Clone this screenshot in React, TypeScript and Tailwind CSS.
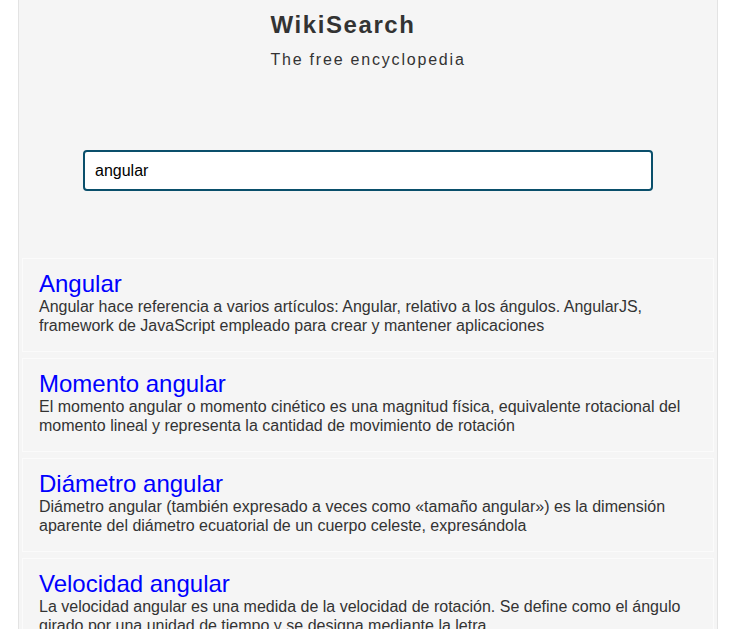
const results = [
  {
    title: 'Angular',
    snippet:
      'Angular hace referencia a varios artículos: Angular, relativo a los ángulos. AngularJS, framework de JavaScript empleado para crear y mantener aplicaciones',
  },
  {
    title: 'Momento angular',
    snippet:
      'El momento angular o momento cinético es una magnitud física, equivalente rotacional del momento lineal y representa la cantidad de movimiento de rotación',
  },
  {
    title: 'Diámetro angular',
    snippet:
      'Diámetro angular (también expresado a veces como «tamaño angular») es la dimensión aparente del diámetro ecuatorial de un cuerpo celeste, expresándola',
  },
  {
    title: 'Velocidad angular',
    snippet:
      'La velocidad angular es una medida de la velocidad de rotación. Se define como el ángulo girado por una unidad de tiempo y se designa mediante la letra',
  },
];

export default function App() {
  return (
    <div className="min-h-screen bg-white font-['Liberation_Sans',Arial,sans-serif] text-[#333]">
      <div className="ml-[18px] w-[700px] border-x border-[#e3e3e3] bg-[#f5f5f5] pb-4">
        <header className="mx-auto w-fit pt-[11px] text-left">
          <h1 className="text-[24px] leading-[28px] font-bold tracking-[1.6px]">WikiSearch</h1>
          <p className="mt-[12px] text-[16px] leading-[18px] tracking-[1.8px]">The free encyclopedia</p>
        </header>

        <div className="mt-[81px] flex justify-center">
          <input
            type="text"
            defaultValue="angular"
            className="h-[41px] w-[570px] rounded-[4px] border-2 border-[#0a4f6b] bg-white px-[10px] text-[16px] text-black outline-none"
          />
        </div>

        <div className="mt-[67px] flex flex-col gap-[6px] px-[3px]">
          {results.map((r) => (
            <div key={r.title} className="border border-[#fbfbfb] bg-[#f5f5f5] px-4 pt-[12px] pb-[16px]">
              <a href="#" className="block text-[24px] leading-[26px] text-[#0000ff]">
                {r.title}
              </a>
              <p className="text-[16px] leading-[19px] text-[#333]">{r.snippet}</p>
            </div>
          ))}
        </div>
      </div>
    </div>
  );
}
